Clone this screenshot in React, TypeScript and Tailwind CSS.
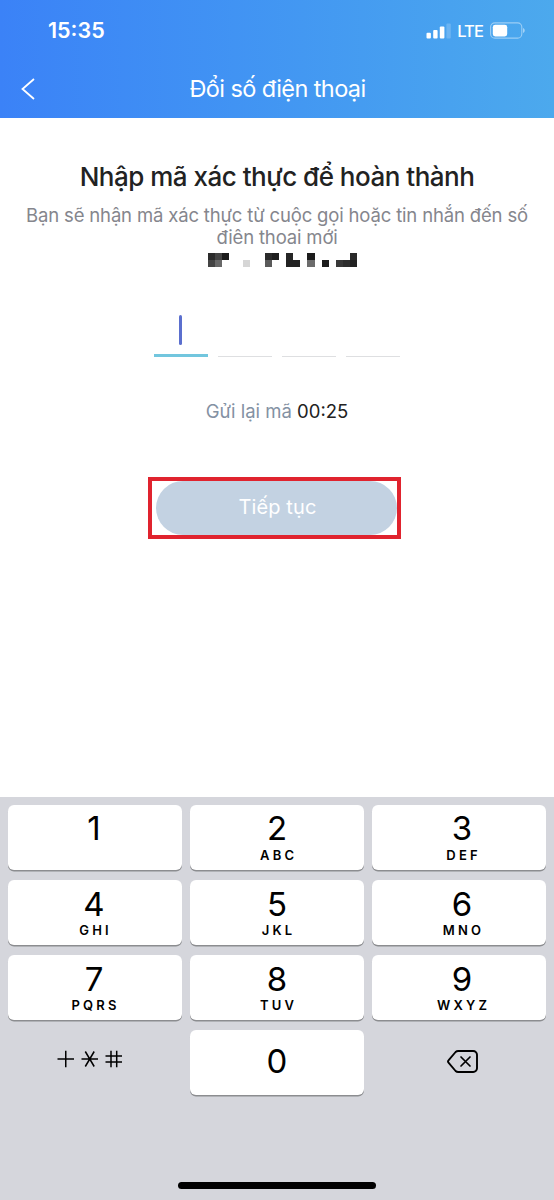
import type { FC } from 'react';

interface KeyProps {
  digit: string;
  letters?: string;
}

const keys: KeyProps[] = [
  { digit: '1' },
  { digit: '2', letters: 'ABC' },
  { digit: '3', letters: 'DEF' },
  { digit: '4', letters: 'GHI' },
  { digit: '5', letters: 'JKL' },
  { digit: '6', letters: 'MNO' },
  { digit: '7', letters: 'PQRS' },
  { digit: '8', letters: 'TUV' },
  { digit: '9', letters: 'WXYZ' },
];

// labels sit slightly off centre in the outer columns
const columnPadding = ['pr-[2px]', '', 'pl-[6px]'];

// masked phone number, two rows of square cells
const maskRows: Record<number, string>[] = [
  { 0: '#2b2b2b', 1: '#444444', 2: '#1b1b1b', 8: '#2a2a2a', 9: '#1e1e1e', 11: '#262626', 14: '#1c1c1c', 20: '#2a2a2a' },
  { 0: '#444444', 1: '#686868', 5: '#d6d6d6', 8: '#5a5a5a', 11: '#222222', 12: '#222222', 14: '#6b6b6b', 16: '#1c1c1c', 18: '#383838', 19: '#2e2e2e', 20: '#222222' },
];

const StatusBar: FC = () => (
  <div className="flex h-[60px] items-center justify-between pt-[2px] pl-[48px] pr-[28px] text-white">
    <span className="text-[21.5px] font-semibold leading-none">15:35</span>
    <div className="flex items-center">
      <svg className="mb-[1px]" width="25" height="16" viewBox="0 0 25 16" fill="currentColor">
        <rect x="0.500" y="9.7" width="4.4" height="5.8" rx="1" />
        <rect x="7.200" y="7" width="4.4" height="8.5" rx="1" />
        <rect x="13.800" y="3.6" width="4.6" height="11.9" rx="1" />
        <rect x="20.400" y="0.4" width="4.4" height="15.1" rx="1" opacity="0.2" />
      </svg>
      <span className="ml-[6px] text-[16.500px] font-medium leading-none tracking-[-0.9px]">LTE</span>
      <svg className="mb-[1px] ml-[7px] mr-[1px]" width="35" height="17" viewBox="0 0 35 17" fill="none">
        <rect x="0.6" y="0.9" width="31.2" height="15.2" rx="4.2" stroke="#fff" strokeOpacity="0.45" strokeWidth="1.1" />
        <rect x="2.8" y="2.8" width="14.4" height="11.6" rx="2.4" fill="#fff" />
        <path d="M33.2 6v5c.9-.4 1.4-1.400 1.400-2.500s-.5-2.100-1.400-2.500z" fill="#fff" fillOpacity="0.6" />
      </svg>
    </div>
  </div>
);

const Header: FC = () => (
  <header className="h-[118px] bg-linear-to-r from-[#3b82f7] to-[#4ca9ed]">
    <StatusBar />
    <div className="flex h-[58px] items-center pl-[21px] pr-[20px] text-white">
      <svg width="14" height="22" viewBox="0 0 14 22" fill="none" stroke="currentColor" strokeWidth="1.8">
        <path d="M13 1 L1.500 11 L13 21" />
      </svg>
      <h1 className="flex-1 pr-[14px] text-center text-[23.500px] font-normal leading-none tracking-[-0.6px]">Đổi số điện thoại</h1>
    </div>
  </header>
);

const MaskedPhone: FC = () => (
  <div className="mt-[5px] ml-[11px] flex w-[150px] flex-col">
    {maskRows.map((row, r) => (
      <div key={r} className="grid h-[7.2px] grid-cols-21">
        {Array.from({ length: 21 }, (_, i) => (
          <span key={i} style={{ backgroundColor: row[i] }} />
        ))}
      </div>
    ))}
  </div>
);

const CodeInput: FC = () => (
  <div className="mt-[48px] flex h-[42px] w-[247px] justify-between">
    <div className="flex w-[54px] flex-col items-center justify-between border-b-3 border-[#72c6de]">
      <span className="h-[30px] w-[3px] rounded-full bg-[#5b6fce]" />
    </div>
    <div className="w-[54px] border-b border-[#dedfe1]" />
    <div className="w-[54px] border-b border-[#dedfe1]" />
    <div className="w-[54px] border-b border-[#dedfe1]" />
  </div>
);

const Key: FC<KeyProps & { padding: string }> = ({ digit, letters, padding }) => (
  <button
    className={`flex h-[65px] flex-col items-center rounded-[6px] bg-white pt-[7px] text-black shadow-[0_1.500px_0_#8c8d90] ${padding}`}
  >
    <span className={`text-[33px] leading-[33px] ${Number(digit) > 3 ? 'pt-px' : 'pb-px'}`}>{digit}</span>
    {letters && (
      <span className="mt-[2px] pl-[3.2px] text-[13px] font-semibold leading-[14px] tracking-[3.2px]">{letters}</span>
    )}
  </button>
);

const Keypad: FC = () => (
  <div className="flex h-[403px] flex-col items-center bg-[#d5d6dc] pt-[8px]">
    <div className="grid w-[538px] grid-cols-3 gap-x-[8px] gap-y-[10px]">
      {keys.map((key, i) => (
        <Key key={key.digit} {...key} padding={columnPadding[i % 3]} />
      ))}
      <div className="flex h-[65px] items-center justify-center">
        <svg className="mb-[8px] mr-[10px]" width="66" height="18" viewBox="0 0 66 18" fill="none" stroke="#000" strokeWidth="1.5">
          <path d="M0.500 9H17M8.750 0.800V17.200" />
          <path d="M24.500 9H41M28.300 1.500L37.200 16.500M37.200 1.500L28.300 16.500" />
          <path d="M48.500 6H65M48.500 12H65M54 0.800V17.200M59.700 0.800V17.200" />
        </svg>
      </div>
      <button className="flex h-[65px] items-center justify-center rounded-[6px] bg-white pb-[2px] text-[33px] leading-none text-black shadow-[0_1.500px_0_#8c8d90]">
        0
      </button>
      <div className="flex h-[65px] items-center justify-center">
        <svg className="mb-[3px] mr-[-7px]" width="31" height="23" viewBox="0 0 31 23" fill="none" stroke="#000" strokeWidth="1.9" strokeLinecap="round" strokeLinejoin="round">
          <path d="M11.200 1H26.200a3.800 3.800 0 0 1 3.800 3.800V18.200a3.800 3.800 0 0 1-3.800 3.800H11.200a3.800 3.800 0 0 1-2.600-1L1.700 12.900a2 2 0 0 1 0-2.800L8.600 2a3.800 3.800 0 0 1 2.600-1z" />
          <path d="M14 7L23 16M23 7L14 16" strokeWidth="1.7" />
        </svg>
      </div>
    </div>
    <div className="mt-[87px] h-[7px] w-[198px] rounded-full bg-black" />
  </div>
);

export default function App() {
  return (
    <div className="flex h-[1200px] w-[554px] flex-col overflow-hidden bg-white font-['Inter',sans-serif]">
      <Header />
      <main className="flex flex-1 flex-col items-center">
        <h2 className="mt-[43px] whitespace-nowrap text-[26px] font-medium leading-[32px] tracking-[-0.5px] text-[#222222]">
          Nhập mã xác thực để hoàn thành
        </h2>
        <p className="mt-[11px] whitespace-nowrap text-center text-[18.500px] leading-[22px] tracking-[-0.16px] text-[#85868d]">
          Bạn sẽ nhận mã xác thực từ cuộc gọi hoặc tin nhắn đến số
          <br />
          điên thoai mới
        </p>
        <MaskedPhone />
        <CodeInput />
        <p className="mt-[42px] text-[18.500px] leading-[24px] text-[#8391a3]">
          Gửi lại mã <span className="text-[#222222]">00:25</span>
        </p>
        <div className="mt-[54px] ml-[-5px] flex h-[62px] w-[253px] justify-end border-4 border-[#e0232e]">
          <button className="h-[54px] w-[241px] rounded-full bg-[#c3d2e2] pb-[3px] pl-[2px] text-[20px] leading-none tracking-[0.1px] text-white">Tiếp tục</button>
        </div>
      </main>
      <Keypad />
    </div>
  );
}
